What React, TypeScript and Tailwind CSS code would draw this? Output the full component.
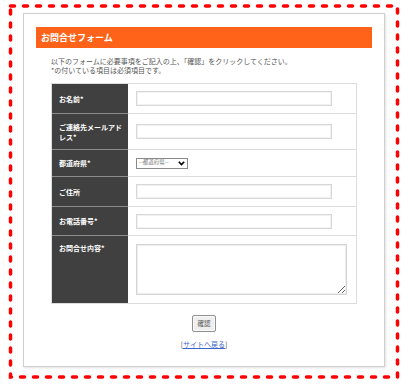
const jp = "font-['Noto_Sans_CJK_JP','Noto_Sans',sans-serif]";

interface Row {
    label: string;
    height: string;
    kind: "input" | "select" | "textarea";
}

const rows: Row[] = [
    {label: "お名前*", height: "h-[30px]", kind: "input"},
    {label: "ご連絡先メールアドレス*", height: "h-[36px]", kind: "input"},
    {label: "都道府県*", height: "h-[27px]", kind: "select"},
    {label: "ご住所", height: "h-[30px]", kind: "input"},
    {label: "お電話番号*", height: "h-[29px]", kind: "input"},
    {label: "お問合せ内容*", height: "h-[67px]", kind: "textarea"},
];

function Field({kind}: {kind: Row["kind"]}) {
    if (kind === "select") {
        return (
            <div className="w-[52px] h-[11px] border border-[#8a8a8a] bg-white flex items-center justify-between pl-[2px] pr-[2px]">
                <span className="text-[5.5px] leading-none text-[#777]">--都道府県--</span>
                <svg width="7" height="5" viewBox="0 0 7 5">
                    <path d="M0.8 0.8 L3.5 3.6 L6.2 0.8" fill="none" stroke="#000" strokeWidth="1.6"/>
                </svg>
            </div>
        );
    }
    if (kind === "textarea") {
        return <textarea className="w-[211px] h-[51px] border border-[#d4d4d4] shadow-[inset_0_0_0_1px_#ededed] bg-white resize-y"/>;
    }
    return <input type="text" className="w-[196px] h-[15px] border border-[#d8d8d8] shadow-[inset_0_0_0_1px_#f1f1f1] bg-white"/>;
}

export default function App() {
    return (
        <div className={`relative w-[404px] h-[389px] bg-white ${jp}`}>
            {/* red dashed frame */}
            <svg className="absolute inset-0 pointer-events-none" width="404" height="389">
                <rect x="10.5" y="6" width="387" height="371" fill="none" stroke="#ff0000"
                      strokeWidth="3.5" strokeDasharray="4 9" strokeLinecap="round"/>
            </svg>

            <div className="pt-[13px] pl-[23px]">
                <div className="w-[362px] h-[354px] border border-[#cfcfcf] shadow-[1px_1px_2px_rgba(0,0,0,0.12)] bg-white">
                    <div className="mx-[12px] mt-[13px] h-[21px] bg-[#ff6319] flex items-center pl-[5px]">
                        <span className="text-white font-bold text-[9px] leading-none">お問合せフォーム</span>
                    </div>

                    <div className="px-[27px]">
                        <div className="mt-[9px] text-[7px] leading-[9px] text-[#555]">
                            <p>以下のフォームに必要事項をご記入の上、「確認」をクリックしてください。</p>
                            <p>*の付いている項目は必須項目です。</p>
                        </div>

                        <div className="mt-[8px] border border-[#dcdcdc]">
                            {rows.map((row, i) => {
                                const last = i === rows.length - 1;
                                return (
                                    <div key={row.label} className={`flex ${row.height}`}>
                                        <div className={`w-[76px] bg-[#404040] text-white font-bold text-[7px] leading-[10px] pl-[7px] pr-[4px] flex ${last ? "items-start pt-[7px]" : "items-center border-b border-[#8c8c8c]"}`}>
                                            {row.label}
                                        </div>
                                        <div className={`flex-1 pl-[8px] flex ${last ? "items-start pt-[8px]" : "items-center border-b border-[#dcdcdc]"}`}>
                                            <Field kind={row.kind}/>
                                        </div>
                                    </div>
                                );
                            })}
                        </div>

                        <div className="flex flex-col items-center">
                            <button className="mt-[11px] w-[24px] h-[17px] border border-[#8f8f8f] rounded-[2px] bg-[#efefef] shadow-[inset_0_0_0_1px_#fafafa] text-[6.5px] leading-none text-[#555]">
                                確認
                            </button>
                            <div className="mt-[8px] text-[7px] leading-[9px] text-[#444]">
                                [<a href="#" className="text-[#3a66cc] underline">サイトへ戻る</a>]
                            </div>
                        </div>
                    </div>
                </div>
            </div>
        </div>
    );
}
